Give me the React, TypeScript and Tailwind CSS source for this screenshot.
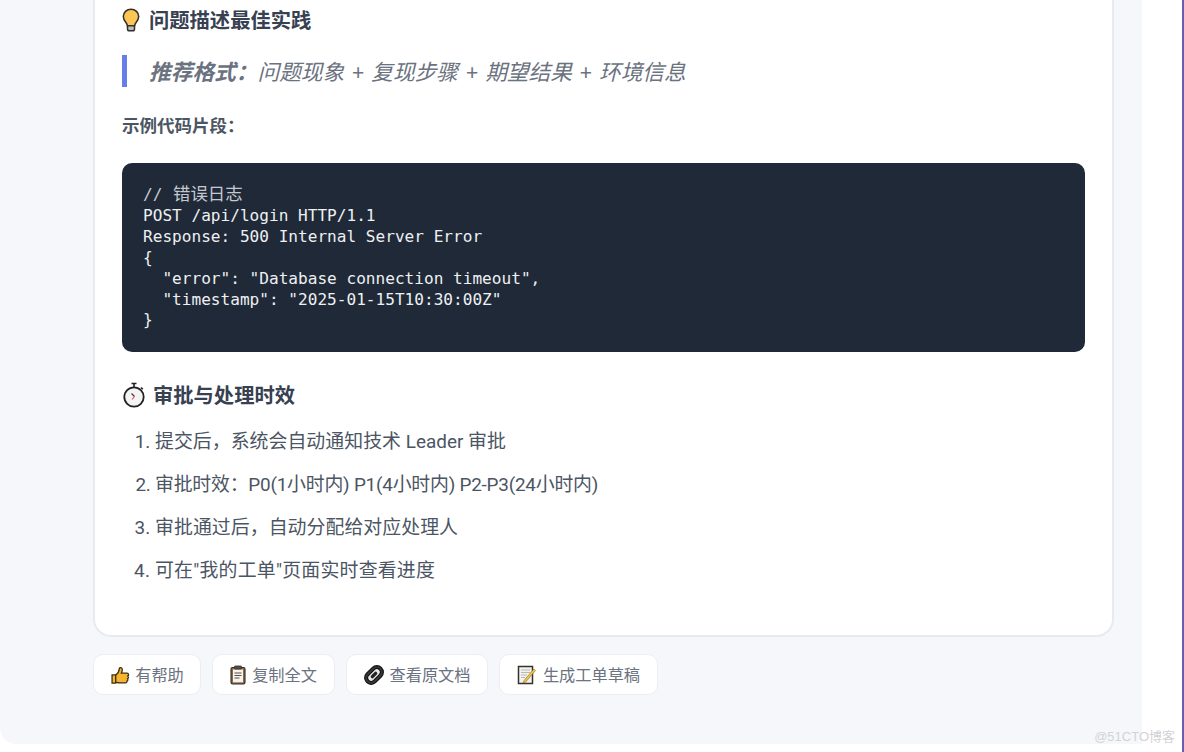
const zh = { fontFamily: '"Noto Sans", "Noto Sans CJK SC", sans-serif' }

function Bulb() {
  return (
    <svg width="18" height="24" viewBox="0 0 18 24" className="shrink-0">
      <path d="M9 1.200C4.600 1.200 1.300 4.500 1.300 8.600c0 2.700 1.300 4.300 2.600 5.900.8 1 1.300 2 1.500 3.200h7.200c.2-1.200.7-2.200 1.500-3.200 1.300-1.600 2.600-3.200 2.600-5.900C16.700 4.500 13.400 1.200 9 1.200z" fill="#fbc653" stroke="#33302b" strokeWidth="1.500" />
      <path d="M5.500 17.800h7v3.100c0 1-.8 1.800-1.800 1.800H7.300c-1 0-1.800-.8-1.800-1.800z" fill="#b9bcc2" stroke="#33302b" strokeWidth="1.500" />
    </svg>
  )
}

function Stopwatch() {
  return (
    <svg width="24" height="26" viewBox="0 0 24 26" className="shrink-0">
      <path d="M9.500 1.500h5M12 1.500v4M19 5.500l1.800 1.800" stroke="#222" strokeWidth="1.600" fill="none" />
      <circle cx="12" cy="15" r="9.700" fill="#f4f4f4" stroke="#222" strokeWidth="1.800" />
      <path d="M9.500 11.500l3 3" stroke="#333" strokeWidth="1.100" />
      <path d="M12.500 14.500l-2.500 3" stroke="#e5484d" strokeWidth="1.100" />
    </svg>
  )
}

function ThumbIcon() {
  return (
    <svg width="19" height="19" viewBox="0 0 18 18" className="ml-[1px]">
      <path d="M1 8.500h3.500v7.800H1z" fill="#f5b52e" stroke="#3b2f14" strokeWidth="1.200" />
      <path d="M4.500 8.500c1.500-1 3.200-3.500 3.400-6 .1-1.400 2.600-1.200 2.800.8.100 1.300-.5 2.500-.9 3.500h5.400c1.700 0 1.900 2.200.7 2.700.9.700.8 2.100-.2 2.500.6.800.3 2-.6 2.300.2 1.100-.5 1.700-1.500 1.700H8c-1.500 0-2.300-.5-3.500-.8z" fill="#f5b52e" stroke="#3b2f14" strokeWidth="1.200" />
    </svg>
  )
}

function ClipboardIcon() {
  return (
    <svg width="16" height="20" viewBox="0 0 16 20">
      <rect x="1" y="2.500" width="14" height="16.500" rx="1.500" fill="#8a6a4a" stroke="#2f2a25" strokeWidth="1.100" />
      <rect x="3" y="4.500" width="10" height="12.800" fill="#f5f3ee" />
      <rect x="4.500" y="1" width="7" height="3" rx="0.800" fill="#55504a" stroke="#2f2a25" strokeWidth="0.800" />
      <path d="M4.500 8h7M4.500 10.500h7M4.500 13h5" stroke="#55504a" strokeWidth="1" />
    </svg>
  )
}

function LinkIcon() {
  return (
    <svg width="20" height="20" viewBox="0 0 20 20">
      <g transform="rotate(-45 10 10)">
        <rect x="-0.500" y="3.500" width="21" height="13" rx="6.500" fill="#3a3a3a" stroke="#111" strokeWidth="1.200" />
        <rect x="2.500" y="6.500" width="15" height="7" rx="3.500" fill="#e8e8e8" stroke="#111" strokeWidth="1.200" />
        <rect x="6" y="8.300" width="8" height="3.400" rx="1.700" fill="#222" />
      </g>
    </svg>
  )
}

function MemoIcon() {
  return (
    <svg width="20" height="20" viewBox="0 0 20 20">
      <path d="M1.500 1.500h14v17h-14z" fill="#f3f3f1" stroke="#33322f" strokeWidth="1.500" />
      <path d="M4 5h9M4 7.500h9M4 10h6M4 12.500h4" stroke="#b7b7b3" strokeWidth="1" />
      <path d="M7 15.500l-.8 2.500 2.500-1L18.500 5.500l-1.700-1.500z" fill="#f7c23c" stroke="#6f5a1d" strokeWidth="0.500" />
    </svg>
  )
}

const actions = [
  { label: '有帮助', icon: <ThumbIcon />, width: 'w-[108px]', gap: 'gap-[5px]' },
  { label: '复制全文', icon: <ClipboardIcon />, width: 'w-[123px]', gap: 'gap-[6px]' },
  { label: '查看原文档', icon: <LinkIcon />, width: 'w-[142px]', gap: 'gap-[6px]' },
  { label: '生成工单草稿', icon: <MemoIcon />, width: 'w-[159px]', gap: 'gap-[6px]' },
]

const steps = [
  { text: '提交后\uFF0C系统会自动通知技术 Leader 审批', tracking: 'tracking-[0.03px]' },
  { text: '审批时效\uFF1AP0(1小时内) P1(4小时内) P2-P3(24小时内)', tracking: 'tracking-[-0.22px]' },
  { text: '审批通过后\uFF0C自动分配给对应处理人', tracking: 'tracking-[0.05px]' },
  { text: '可在"我的工单"页面实时查看进度', tracking: 'tracking-[0.22px]' },
]

const code = `POST /api/login HTTP/1.1
Response: 500 Internal Server Error
{
  "error": "Database connection timeout",
  "timestamp": "2025-01-15T10:30:00Z"
}`

export default function App() {
  return (
    <div className="relative flex w-[1184px] h-[752px] overflow-hidden bg-white" style={zh}>
      <div className="w-[1142px] h-[744px] shrink-0 bg-[#f6f7fb] rounded-bl-[16px] pl-[93px]">
        <div className="w-[1021px] h-[637px] bg-white border-x-2 border-b-2 border-[#e9eaf0] rounded-b-[18px] px-[27px] pt-[5px]">
          <h3 className="flex items-center gap-[9px] h-[30px] text-[20.300px] font-bold text-[#374151]">
            <Bulb />
            问题描述最佳实践
          </h3>

          <blockquote className="mt-[20px] h-[32px] flex items-center border-l-[5px] border-[#667eea] pl-[22px] pt-[2px] text-[21.700px] italic text-[#6b7280]">
            <strong className="font-bold">推荐格式{'\uFF1A'}</strong>
            <span className="[word-spacing:1.700px]">问题现象 + 复现步骤 + 期望结果 + 环境信息</span>
          </blockquote>

          <p className="mt-[25px] h-[26px] leading-[26px] text-[17.500px] font-bold text-[#4b5563]">示例代码片段{'\uFF1A'}</p>

          <pre
            className="mt-[25px] h-[189px] bg-[#1f2937] rounded-[10px] pl-[21px] pt-[21px] text-[16.100px] leading-[20.900px] text-[#eef0f3] whitespace-pre"
            style={{ fontFamily: '"DejaVu Sans Mono", "Noto Sans CJK SC", monospace' }}
          >
            <span className="text-[#c4c9d1]">// <span className="ml-[1px] text-[17.400px]">错误日志</span></span>
            {'\n'}
            {code}
          </pre>

          <h3 className="mt-[28px] flex items-center gap-[7px] h-[30px] text-[20.300px] font-bold text-[#374151]">
            <Stopwatch />
            审批与处理时效
          </h3>

          <ol
            className="mt-[17px] pl-[33px] list-decimal text-[18.900px] leading-[30px] text-[#4b5563]"
            style={{ fontFamily: 'Roboto, "Noto Sans CJK SC", sans-serif' }}
          >
            {steps.map((step) => (
              <li key={step.text} className={`mb-[13px] ${step.tracking}`}>{step.text}</li>
            ))}
          </ol>
        </div>

        <div className="mt-[17px] flex gap-[11px]">
          {actions.map((a) => (
            <button
              key={a.label}
              className={`${a.width} ${a.gap} h-[41px] pt-[1px] flex items-center justify-center bg-white border border-[#eceef3] rounded-[10px] text-[16.200px] text-[#6b7280]`}
            >
              {a.icon}
              {a.label}
            </button>
          ))}
        </div>
      </div>

      <div className="flex-1 border-r-2 border-[#6b5cb0]" />

      <span
        className="absolute right-[9px] bottom-[6px] text-[13px] text-[#d2d3d6]"
        style={{ fontFamily: '"Liberation Sans", "Noto Sans CJK SC", sans-serif' }}
      >
        @51CTO博客
      </span>
    </div>
  )
}
